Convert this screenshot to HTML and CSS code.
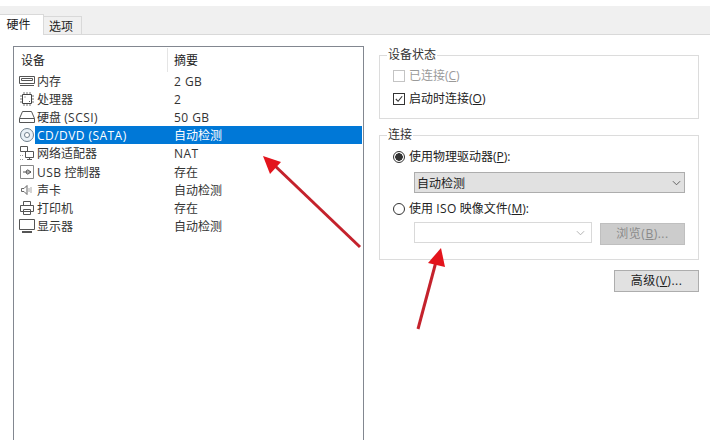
FILE: index.html
```html
<!DOCTYPE html>
<html lang="zh">
<head>
<meta charset="utf-8">
<title>虚拟机设置</title>
<link rel="stylesheet" href="styles.css">
</head>
<body>
<div class="tabstrip">
  <div class="tab active">硬件</div>
  <div class="tab">选项</div>
</div>
<main class="content">
  <section class="devices">
    <div class="head">
      <div class="col-a">设备</div>
      <div class="col-b">摘要</div>
    </div>
    <div class="row">
      <svg class="ico" viewBox="0 0 16 16"><path d="M.5 3.500h15v7h-15zM2.500 5.500h11v2h-11zM1 12.500h14" fill="none" stroke="#555"/></svg>
      <span class="name">内存</span><span class="sum lat">2 GB</span>
    </div>
    <div class="row">
      <svg class="ico" viewBox="0 0 16 16"><path d="M3.500 3.500h9v9h-9z" fill="none" stroke="#444"/><path d="M5 1v2M8 1v2M11 1v2M5 13v2M8 13v2M11 13v2M1 5h2M1 8h2M1 11h2M13 5h2M13 8h2M13 11h2" stroke="#777"/><path d="M5.500 5.500h1v1h-1zM10 10h1v1h-1z" fill="#555"/></svg>
      <span class="name">处理器</span><span class="sum">2</span>
    </div>
    <div class="row">
      <svg class="ico" viewBox="0 0 16 16"><path d="M3.500 2.500h9l3 7v4h-15v-4zM.5 9.500h15" fill="none" stroke="#555"/></svg>
      <span class="name">硬盘 <span class="lat">(SCSI)</span></span><span class="sum lat">50 GB</span>
    </div>
    <div class="row selected">
      <svg class="ico" viewBox="0 0 16 16"><circle cx="8" cy="8" r="6.500" fill="#e8f0f6" stroke="#6f7f8c"/><circle cx="8" cy="8" r="2.500" fill="#fff" stroke="#6f7f8c"/></svg>
      <span class="name lat">CD/DVD (SATA)</span><span class="sum">自动检测</span>
    </div>
    <div class="row">
      <svg class="ico" viewBox="0 0 16 16"><path d="M1.500 1.500h7v5h-7zM6.500 6.500h8v6h-8zM10.500 12.500v2M8 14.500h5" fill="#fff" stroke="#555"/><path d="M1 10.500h4M1 14.500h4" stroke="#999" stroke-dasharray="1 1"/></svg>
      <span class="name">网络适配器</span><span class="sum lat">NAT</span>
    </div>
    <div class="row">
      <svg class="ico" viewBox="0 0 16 16"><path d="M1.500 1.500h13v13h-13z" fill="none" stroke="#888"/><path d="M4 8h8M9 6l3 2-3 2M7 8l1-2h1M7 8l1 2h1" fill="none" stroke="#555"/></svg>
      <span class="name"><span class="lat">USB</span> 控制器</span><span class="sum">存在</span>
    </div>
    <div class="row">
      <svg class="ico" viewBox="0 0 16 16"><path d="M2.500 6.500h2.500l3-3v9l-3-3h-2.500z" fill="none" stroke="#666"/><path d="M10 6v4M12 5v6" stroke="#aaa"/></svg>
      <span class="name">声卡</span><span class="sum">自动检测</span>
    </div>
    <div class="row">
      <svg class="ico" viewBox="0 0 16 16"><path d="M4.500 1.500h7v4h-7zM1.500 5.500h13v6h-13zM4.500 9.500h7v5h-7z" fill="#fff" stroke="#555"/></svg>
      <span class="name">打印机</span><span class="sum">存在</span>
    </div>
    <div class="row">
      <svg class="ico" viewBox="0 0 16 16"><path d="M.5 1.500h15v10h-15z" fill="none" stroke="#555"/><path d="M3 14h10" stroke="#555" stroke-width="2"/></svg>
      <span class="name">显示器</span><span class="sum">自动检测</span>
    </div>
  </section>
  <aside class="side">
    <fieldset class="group state">
      <legend>设备状态</legend>
      <div class="opt muted"><span class="box off"></span><span>已连接(<u>C</u>)</span></div>
      <div class="opt"><span class="box"><svg viewBox="0 0 11 11"><path d="M2 5.500l2.500 2.500 4.500-5.500" fill="none" stroke="#333" stroke-width="1.200"/></svg></span><span>启动时连接(<u>O</u>)</span></div>
    </fieldset>
    <fieldset class="group conn">
      <legend>连接</legend>
      <div class="opt"><span class="radio on"></span><span>使用物理驱动器(<u>P</u>):</span></div>
      <div class="select"><span class="val">自动检测</span><svg class="chev" viewBox="0 0 10 6"><path d="M1 1l4 4 4-4" fill="none" stroke="#555"/></svg></div>
      <div class="opt"><span class="radio"></span><span>使用 <span class="lat">ISO</span> 映像文件(<u>M</u>):</span></div>
      <div class="isoline">
        <div class="combo"><svg class="chev" viewBox="0 0 10 6"><path d="M1 1l4 4 4-4" fill="none" stroke="#aaa"/></svg></div>
        <div class="btn disabled">浏览(<u>B</u>)...</div>
      </div>
    </fieldset>
    <div class="btn adv">高级(<u>V</u>)...</div>
  </aside>
</main>
<svg class="arrows" viewBox="0 0 710 440">
  <path d="M360 247 L273 164" stroke="#c4222c" stroke-width="3" fill="none"/>
  <path d="M263 156 L281 162 L270 174 Z" fill="#e3141c"/>
  <path d="M418 329 L437 258" stroke="#c4222c" stroke-width="3" fill="none"/>
  <path d="M441 248 L428 263 L445 267 Z" fill="#e3141c"/>
</svg>
</body>
</html>
```
FILE: styles.css
```css
* { box-sizing: border-box; }
html, body { margin: 0; padding: 0; }
body {
  width: 710px;
  height: 440px;
  overflow: hidden;
  background: #fff;
  color: #222;
  font: 12px/18px "Open Sans", "Noto Sans CJK SC", sans-serif;
  position: relative;
  padding-top: 6px;
}
.lat { letter-spacing: .45px; }
.tabstrip {
  height: 29px;
  background: #f0f0f0;
  border-bottom: 1px solid #d9d9d9;
  display: flex;
  align-items: flex-end;
}
.tab {
  width: 38px;
  height: 19px;
  margin-bottom: -1px;
  background: #f0f0f0;
  border: 1px solid #d9d9d9;
  padding: 1px 3px 0 0;
  text-align: center;
  line-height: 18px;
}
.tab.active {
  width: 44px;
  height: 21px;
  background: #fff;
  border-left: 0;
  border-bottom: 0;
  padding: 1px 6px 0 0;
}
.tab.active + .tab { border-left: 0; }
.content {
  display: flex;
  align-items: flex-start;
  padding: 11px 11px 0 13px;
}
.devices {
  width: 351px;
  height: 400px;
  flex: none;
  border: 1px solid #828790;
  padding: 0 1px;
}
.head {
  display: flex;
  height: 24.5px;
  align-items: center;
  padding-top: 2px;
}
.col-a { width: 153px; padding-left: 6px; border-right: 1px solid #e5e5e5; height: 24px; line-height: 26px; }
.col-b { padding: 2px 0 0 6px; }
.row {
  display: flex;
  align-items: center;
  height: 18.2px;
  padding-left: 4px;
  color: #333;
}
.ico { width: 16px; height: 16px; flex: none; }
.name { width: 138px; margin-left: 1px; padding: 2px 0 0 1px; }
.sum { padding-top: 2px; }
.selected {
  background: linear-gradient(to right, #fff 20px, #0078d7 20px);
  color: #fff;
}
.side {
  margin: 1px 0 0 15px;
  width: 320px;
  flex: none;
  display: flex;
  flex-direction: column;
}
.group {
  margin: 0;
  padding: 0 13px;
  border: 1px solid #dcdcdc;
  min-width: 0;
}
.group legend {
  padding: 0 1px;
  margin-left: -6px;
  line-height: 16px;
  color: #333;
}
.state { height: 72px; padding-top: 4px; margin-bottom: 8px; }
.state .opt + .opt { margin-top: 5px; }
.conn { height: 133px; }
.opt { display: flex; align-items: center; height: 18px; gap: 4px; }
.muted { color: #9a9a9a; }
.box {
  width: 12px;
  height: 12px;
  border: 1px solid #333;
  background: #fff;
  display: block;
  flex: none;
}
.box svg { display: block; width: 10px; height: 10px; }
.box.off { border-color: #c4c4c4; }
.radio {
  width: 12px;
  height: 12px;
  border: 1px solid #333;
  border-radius: 50%;
  background: #fff;
  flex: none;
  display: block;
}
.radio.on { background: radial-gradient(circle, #333 3.5px, #fff 4px); }
.conn .opt:first-of-type { margin-top: 5px; }
.select {
  margin: 6px 0 7px 21px;
  width: 271px;
  height: 21px;
  background: #e1e1e1;
  border: 1px solid #adadad;
  padding-left: 2px;
  line-height: 20px;
  display: flex;
  justify-content: space-between;
  align-items: center;
}
.val { padding-top: 2px; }
.chev { width: 9px; height: 6px; margin-right: 3px; flex: none; }
.isoline {
  margin: 4px 0 0 21px;
  display: flex;
  align-items: flex-start;
  gap: 8px;
}
.combo {
  width: 178px;
  height: 21px;
  border: 1px solid #d9d9d9;
  display: flex;
  justify-content: flex-end;
  align-items: center;
  padding-right: 3px;
}
.btn {
  width: 85px;
  height: 22px;
  background: #e1e1e1;
  border: 1px solid #adadad;
  line-height: 20px;
  text-align: center;
  color: #222;
  letter-spacing: .5px;
}
.btn.disabled {
  margin-top: 1px;
  background: #cccccc;
  border-color: #bfbfbf;
  color: #8a8a8a;
}
.adv { align-self: flex-end; margin-top: 10px; }
.arrows {
  position: absolute;
  left: 0;
  top: 0;
  width: 710px;
  height: 440px;
  pointer-events: none;
}
```
